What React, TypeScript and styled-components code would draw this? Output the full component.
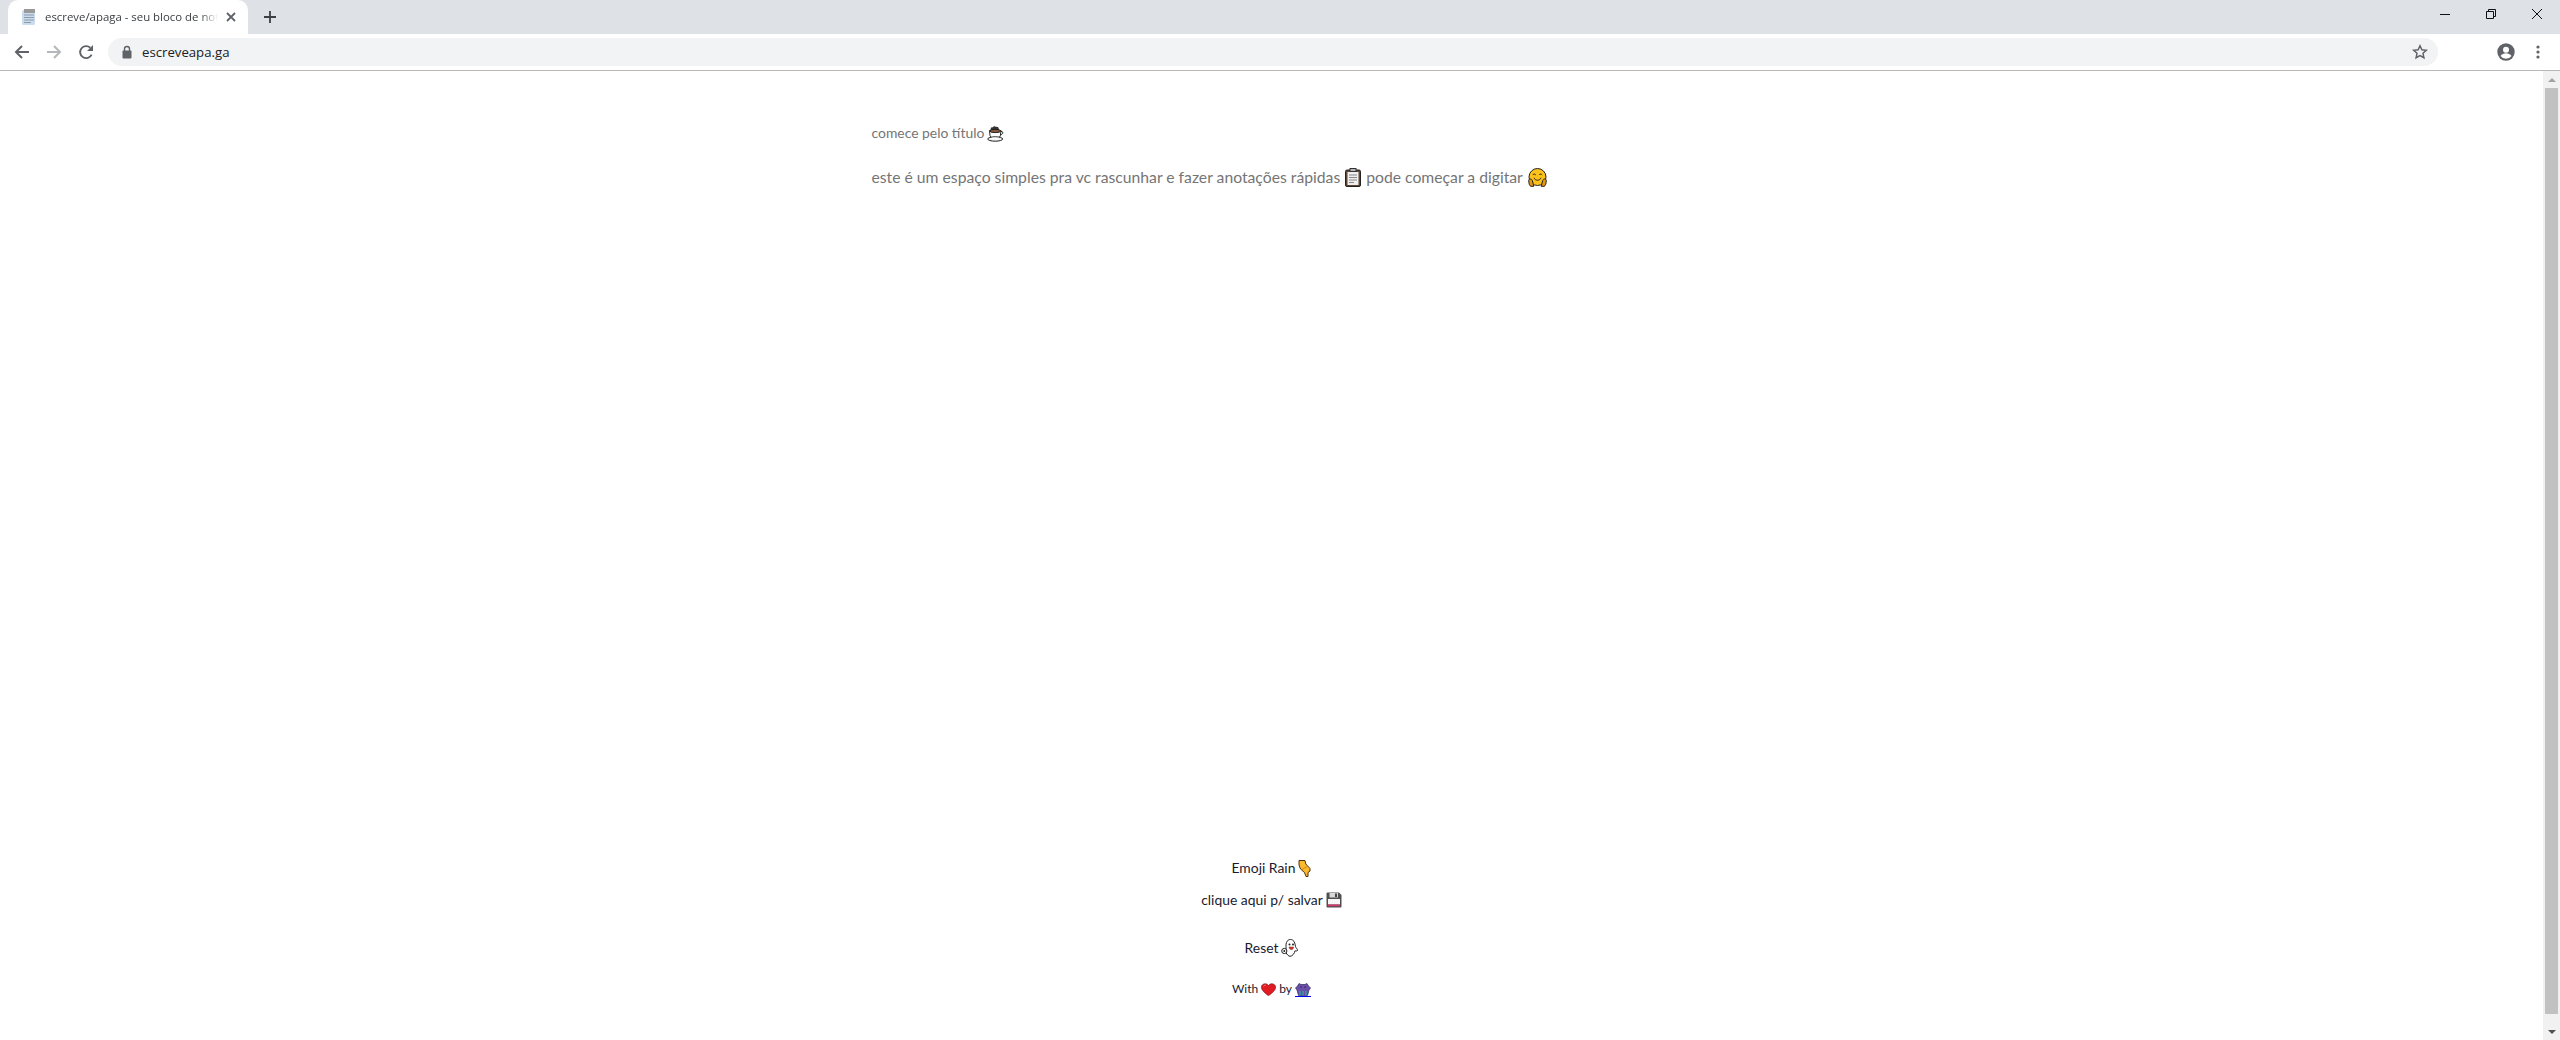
import React from 'react';
import styled, { createGlobalStyle } from 'styled-components';

const GlobalStyle = createGlobalStyle`
  html, body {
    margin: 0;
    padding: 0;
    height: 100%;
    overflow: hidden;
    background: #fff;
  }
  #root {
    height: 100%;
  }
`;

const Page = styled.div`
  width: 2560px;
  height: 1040px;
  display: flex;
  flex-direction: column;
`;

const TabStrip = styled.div`
  height: 34px;
  background: #dee1e6;
  display: flex;
  align-items: flex-end;
  padding-left: 8px;
  flex-shrink: 0;
`;

const Tab = styled.div`
  width: 240px;
  height: 34px;
  box-sizing: border-box;
  background: #fff;
  border-radius: 10px 10px 0 0;
  display: flex;
  align-items: center;
  padding: 0 12px 0 13px;
  gap: 8px;
`;

const TabTitle = styled.div`
  flex: 1;
  overflow: hidden;
  white-space: nowrap;
  font: 11.4px/16px "Open Sans", sans-serif;
  color: #3c4043;
  -webkit-mask-image: linear-gradient(to right, #000 90%, transparent 100%);
  mask-image: linear-gradient(to right, #000 90%, transparent 100%);
`;

const NewTab = styled.div`
  width: 28px;
  height: 28px;
  margin: 0 0 3px 8px;
  display: flex;
  align-items: center;
  justify-content: center;
`;

const WindowControls = styled.div`
  margin-left: auto;
  align-self: flex-start;
  display: flex;
`;

const WindowButton = styled.div`
  width: 46px;
  height: 28px;
  display: flex;
  align-items: center;
  justify-content: center;
`;

const Toolbar = styled.div`
  height: 36px;
  flex-shrink: 0;
  box-sizing: border-box;
  display: flex;
  align-items: center;
  padding: 0 6px 0 6px;
  background: #fff;
`;

const NavButton = styled.div`
  width: 32px;
  height: 28px;
  display: flex;
  align-items: center;
  justify-content: center;
`;

const ForwardButton = styled(NavButton)`
  transform: scaleX(-1);
`;

const Omnibox = styled.div`
  flex: 1;
  height: 28px;
  margin: 0 52px 0 6px;
  padding: 0 10px 0 13px;
  border-radius: 14px;
  background: #f1f3f4;
  display: flex;
  align-items: center;
  gap: 9px;
`;

const Url = styled.div`
  flex: 1;
  font: 13.2px/18px "Open Sans", sans-serif;
  color: #202124;
`;

const Divider = styled.div`
  height: 1px;
  background: #b8b8b8;
  flex-shrink: 0;
`;

const Viewport = styled.div`
  flex: 1;
  min-height: 0;
  display: flex;
`;

const Content = styled.main`
  flex: 1;
  min-width: 0;
  display: flex;
  flex-direction: column;
  align-items: center;
`;

const Editor = styled.div`
  width: 800px;
  padding-top: 52px;
  flex: 1;
`;

const TitleLine = styled.div`
  font: 13.9px/20px Lato, sans-serif;
  color: #757575;
  display: flex;
  align-items: center;
  gap: 3px;
`;

const BodyLine = styled.div`
  margin-top: 22px;
  font: 15.73px/24px Lato, sans-serif;
  color: #757575;
  display: flex;
  align-items: center;
  gap: 5px;
`;

const Footer = styled.footer`
  display: flex;
  flex-direction: column;
  align-items: center;
  padding-bottom: 42px;
  color: #1a1a2e;
  font-family: Lato, sans-serif;
`;

const FooterAction = styled.div<{ $gap: number }>`
  margin-bottom: ${(p) => p.$gap}px;
  font-size: 13.9px;
  line-height: 20px;
  display: flex;
  align-items: center;
  gap: 3px;
`;

const Credit = styled.div`
  font-size: 12px;
  line-height: 18px;
  display: flex;
  align-items: center;
  gap: 3px;
`;

const CreditLink = styled.a`
  display: flex;
  border-bottom: 1px solid #0000ee;
`;

const Scrollbar = styled.div`
  width: 17px;
  flex-shrink: 0;
  background: #f1f1f1;
  display: flex;
  flex-direction: column;
  align-items: center;
`;

const ScrollArrow = styled.div<{ $down?: boolean }>`
  height: 17px;
  flex-shrink: 0;
  display: flex;
  align-items: center;
  justify-content: center;
  &::before {
    content: '';
    border-left: 4px solid transparent;
    border-right: 4px solid transparent;
    ${(p) => (p.$down ? 'border-top: 4px solid #505050;' : 'border-bottom: 4px solid #a3a3a3;')}
  }
`;

const ScrollThumb = styled.div`
  width: 13px;
  flex: 1;
  background: #c1c1c1;
  margin-bottom: 9px;
`;

const ArrowLeft = ({ color }: { color: string }) => (
  <svg width="16" height="16" viewBox="0 0 16 16" fill="none" stroke={color} strokeWidth="2">
    <path d="M15 8H2M8 2 2 8l6 6" />
  </svg>
);

const Reload = () => (
  <svg width="16" height="16" viewBox="0 0 16 16" fill="none">
    <path d="M13.6 10.6A6 6 0 1 1 12.3 3.8" stroke="#5f6368" strokeWidth="1.9" />
    <path d="M15 1v6H9z" fill="#5f6368" />
  </svg>
);

const Lock = () => (
  <svg width="12" height="14" viewBox="0 0 12 14">
    <path d="M3.5 6V4a2.5 2.5 0 0 1 5 0v2" fill="none" stroke="#5f6368" strokeWidth="1.4" />
    <rect x="1.5" y="5.5" width="9" height="8" rx="1" fill="#5f6368" />
  </svg>
);

const Star = () => (
  <svg width="16" height="16" viewBox="0 0 16 16" fill="none" stroke="#5f6368" strokeWidth="1.5">
    <path d="m8 1.8 1.9 4 4.4.5-3.3 3 .9 4.4L8 11.5l-3.9 2.2.9-4.4-3.3-3 4.4-.5z" />
  </svg>
);

const Account = () => (
  <svg width="18" height="18" viewBox="0 0 18 18">
    <circle cx="9" cy="9" r="8.7" fill="#5f6368" />
    <circle cx="9" cy="6.8" r="3" fill="#fff" />
    <path d="M3.5 13c1.2-2 3.4-2.8 5.5-2.8s4.3.8 5.5 2.8A7 7 0 0 1 9 15.8 7 7 0 0 1 3.5 13z" fill="#fff" />
  </svg>
);

const Dots = () => (
  <svg width="4" height="14" viewBox="0 0 4 14" fill="#5f6368">
    <circle cx="2" cy="2" r="1.6" />
    <circle cx="2" cy="7" r="1.6" />
    <circle cx="2" cy="12" r="1.6" />
  </svg>
);

const NotepadFavicon = () => (
  <svg width="16" height="18" viewBox="0 0 16 18">
    <rect x="1" y="2" width="13" height="15" rx="1.5" fill="#c9dcf0" />
    <rect x="3" y="1" width="11" height="4" fill="#9a9a9a" />
    <path d="M3 7h10M3 9.5h10M3 12h10M3 14.5h7" stroke="#8f9aa5" strokeWidth="1" />
  </svg>
);

const CoffeeEmoji = () => (
  <svg width="17" height="17" viewBox="0 0 17 17">
    <path d="M3.5 5c0-2 1-3.500 2-2.500C6.500 1 8 .8 9 2c1.500-.8 3 .5 3 3z" fill="#333" />
    <path d="M2.500 5.500h11.500l-.6 5c-.4 2-2.400 3-5.100 3s-4.900-1-5.300-3z" fill="#fff" stroke="#222" />
    <ellipse cx="8.200" cy="6" rx="5.400" ry="1.600" fill="#8a5a3a" stroke="#222" />
    <path d="M14 6.500c2.500-.5 2.500 3-.6 3.500" fill="none" stroke="#222" />
    <ellipse cx="8.200" cy="14" rx="7.500" ry="2.200" fill="#f2f2f2" stroke="#222" />
    <ellipse cx="8.200" cy="13.500" rx="4" ry="1" fill="#fff" />
  </svg>
);

const ClipboardEmoji = () => (
  <svg width="16" height="19" viewBox="0 0 16 19">
    <rect x=".5" y="2" width="15" height="16.500" rx="1.500" fill="#5f4534" stroke="#222" />
    <rect x="2.500" y="4" width="11" height="13" fill="#efefef" />
    <rect x="5" y=".5" width="6" height="3" fill="#b5b5b5" stroke="#333" />
    <path d="M4 7h8M4 9.500h8M4 12h8M4 14.500h5" stroke="#888" />
  </svg>
);

const HuggingEmoji = () => (
  <svg width="19" height="19" viewBox="0 0 19 19">
    <circle cx="9.500" cy="9" r="8.500" fill="#fcc21b" stroke="#222" />
    <path d="M4.800 7c.8-1.300 2-1.300 3 0M11.200 7c.8-1.300 2-1.300 3 0" fill="none" stroke="#222" />
    <path d="M6 9.800c1 3.200 6 3.200 7 0" fill="none" stroke="#222" />
    <path d="M.7 12.500c0-2 3-2 3.600 0l1.500 5.800H3c-1.500 0-2.300-3.500-2.300-5.800zM18.300 12.500c0-2-3-2-3.600 0l-1.500 5.800H16c1.500 0 2.300-3.500 2.300-5.800z" fill="#e59a0c" stroke="#222" />
  </svg>
);

const PointingEmoji = () => (
  <svg width="13" height="17" viewBox="0 0 13 17">
    <path d="M1 .5h6l.8 3.500 4.200 4.500V11l-2 1.500v4H8l-1.500-4L2.500 9 1 5z" fill="#fdb92c" stroke="#4a3510" strokeLinejoin="round" />
    <path d="M4 9.500 10 6" stroke="#c98a14" fill="none" />
  </svg>
);

const FloppyEmoji = () => (
  <svg width="16" height="16" viewBox="0 0 16 16">
    <path d="M.5 1.500a1 1 0 0 1 1-1h11.500l2.500 2.500v11.500a1 1 0 0 1-1 1h-13a1 1 0 0 1-1-1z" fill="#4f4f4f" />
    <rect x="3.500" y="1" width="8.500" height="4.500" fill="#d8d8d8" />
    <rect x="9" y="1.500" width="2" height="3.500" fill="#444" />
    <rect x="2" y="7" width="12" height="5.500" fill="#f6f6f6" />
    <rect x="2" y="12.500" width="12" height="1.800" fill="#d0356a" />
  </svg>
);

const GhostEmoji = () => (
  <svg width="17" height="18" viewBox="0 0 17 18">
    <path d="M5 7.500C4.500 1 9-.5 11.500 1c2.500 1.500 2.500 4.500 3 6.500.3 1.500 2.500 3 2 4-.5.800-2 .3-2.500.3-.5 2.500-2.500 5.500-5 5.500-1.500 0-3-2-4-3.500z" fill="#fff" stroke="#222" />
    <circle cx="8.500" cy="5.500" r="1" fill="#222" />
    <circle cx="12" cy="5.500" r="1" fill="#222" />
    <path d="M8 8h4.500c0 3.500-4 3.500-4.500 0z" fill="#e8332a" stroke="#222" strokeWidth=".4" />
    <circle cx="3.300" cy="12" r="2.600" fill="#fff" stroke="#222" />
    <circle cx="3.300" cy="12" r="1" fill="#222" />
  </svg>
);

const Heart = () => (
  <svg width="15" height="13" viewBox="0 0 15 13">
    <path d="M7.500 12.700C3 9.500.4 7 .4 4 .4.800 5.500-.6 7.500 2.600c2-3.200 7.100-1.800 7.100 1.400 0 3-2.600 5.500-7.100 8.700z" fill="#e11b22" stroke="#7a0a10" strokeWidth=".6" />
    <path d="M2.500 3.500C3 2.500 4 2 5 2.300" stroke="#f47c7c" fill="none" />
  </svg>
);

const MonkeyWitch = () => (
  <svg width="16" height="14" viewBox="0 0 16 14">
    <path d="M4 1.500 6 2.500h4L12 1.500l1.500 2.500 2 2-1.500 2-1.500 5.500h-9L2 8 .5 6l2-2z" fill="#6a4fa8" stroke="#33255e" strokeWidth=".7" />
    <circle cx="6" cy="5" r=".7" fill="#221a40" />
    <circle cx="10" cy="5" r=".7" fill="#221a40" />
    <path d="M5 9v4.500M8 9v4.500M11 9v4.500" stroke="#3a9aa0" strokeWidth="1.500" />
  </svg>
);

const App = () => (
  <Page>
    <GlobalStyle />
    <TabStrip>
      <Tab>
        <NotepadFavicon />
        <TabTitle>escreve/apaga - seu bloco de notas</TabTitle>
        <svg width="10" height="10" viewBox="0 0 10 10" stroke="#5f6368" strokeWidth="1.8">
          <path d="M1 1l8 8M9 1 1 9" />
        </svg>
      </Tab>
      <NewTab>
        <svg width="12" height="12" viewBox="0 0 12 12" stroke="#3c4043" strokeWidth="1.8">
          <path d="M6 0v12M0 6h12" />
        </svg>
      </NewTab>
      <WindowControls>
        <WindowButton>
          <svg width="10" height="10" viewBox="0 0 10 10" stroke="#111">
            <path d="M0 5.500h10" />
          </svg>
        </WindowButton>
        <WindowButton>
          <svg width="10" height="10" viewBox="0 0 10 10" fill="none" stroke="#111">
            <path d="M.5 2.500h7v7h-7zM2.500 2.500v-2h7v7h-2" />
          </svg>
        </WindowButton>
        <WindowButton>
          <svg width="10" height="10" viewBox="0 0 10 10" stroke="#111">
            <path d="M0 0l10 10M10 0 0 10" />
          </svg>
        </WindowButton>
      </WindowControls>
    </TabStrip>
    <Toolbar>
      <NavButton><ArrowLeft color="#5f6368" /></NavButton>
      <ForwardButton><ArrowLeft color="#b5b7ba" /></ForwardButton>
      <NavButton><Reload /></NavButton>
      <Omnibox>
        <Lock />
        <Url>escreveapa.ga</Url>
        <Star />
      </Omnibox>
      <NavButton><Account /></NavButton>
      <NavButton><Dots /></NavButton>
    </Toolbar>
    <Divider />
    <Viewport>
      <Content>
        <Editor>
          <TitleLine>comece pelo título <CoffeeEmoji /></TitleLine>
          <BodyLine>
            este é um espaço simples pra vc rascunhar e fazer anotações rápidas <ClipboardEmoji /> pode começar a digitar <HuggingEmoji />
          </BodyLine>
        </Editor>
        <Footer>
          <FooterAction $gap={12}>Emoji Rain <PointingEmoji /></FooterAction>
          <FooterAction $gap={28}>clique aqui p/ salvar <FloppyEmoji /></FooterAction>
          <FooterAction $gap={22}>Reset <GhostEmoji /></FooterAction>
          <Credit>With <Heart /> by <CreditLink href="#"><MonkeyWitch /></CreditLink></Credit>
        </Footer>
      </Content>
      <Scrollbar>
        <ScrollArrow />
        <ScrollThumb />
        <ScrollArrow $down />
      </Scrollbar>
    </Viewport>
  </Page>
);

export default App;
